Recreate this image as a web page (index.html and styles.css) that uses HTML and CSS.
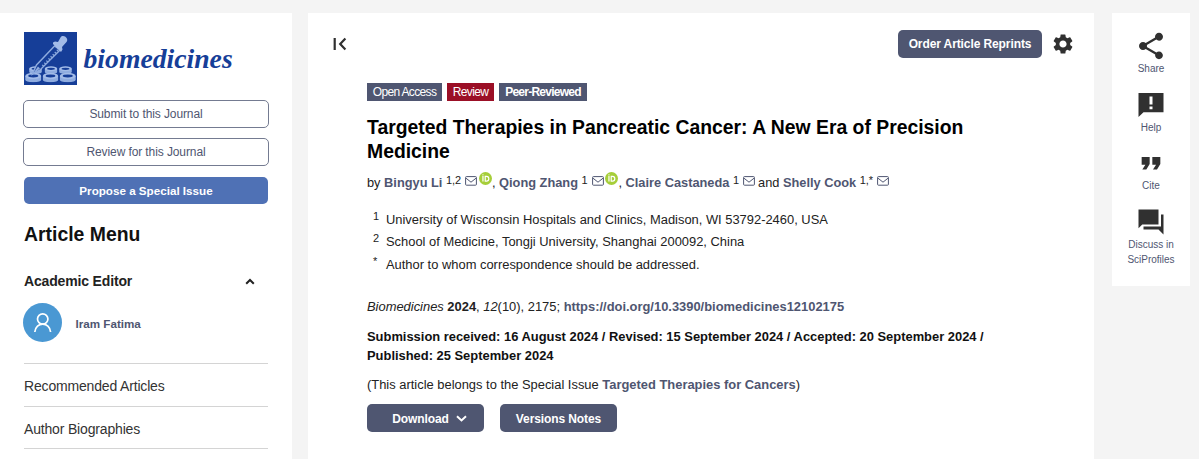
FILE: index.html
```html
<!DOCTYPE html>
<html lang="en">
<head>
<meta charset="utf-8">
<title>Targeted Therapies in Pancreatic Cancer</title>
<link rel="stylesheet" href="styles.css">
</head>
<body>
<svg width="0" height="0" class="defs">
  <symbol id="mail" viewBox="0 0 12 10"><rect x=".6" y=".6" width="10.8" height="8.6" rx=".8" fill="none" stroke="#4f5671"/><path d="M1 2.2 6 6.2 11 2.2" fill="none" stroke="#4f5671"/></symbol>
  <symbol id="orcid" viewBox="0 0 24 24"><circle cx="12" cy="12" r="12" fill="#a6ce39"/><path d="M7.300 7.600V17.500M11.500 8h2.500c5.500 0 5.500 8.700 0 8.700h-2.500z" fill="none" stroke="#fff" stroke-width="2.200"/><circle cx="7.300" cy="5.300" r="1.300" fill="#fff"/></symbol>
  <symbol id="dish" viewBox="0 0 17 10" preserveAspectRatio="none"><path d="M.3 3.500v3.600q0 2.600 8.200 2.600t8.200-2.600V3.500z" fill="#8facdf"/><ellipse cx="8.500" cy="3.400" rx="8.200" ry="3.200" fill="#a3bce8"/><ellipse cx="8.500" cy="3.500" rx="5.200" ry="1.400" fill="#163e98"/></symbol>
</svg>
<div class="page">
  <aside class="sidebar">
    <a class="logo">
      <svg width="53" height="53" viewBox="0 0 53 53">
        <rect width="53" height="53" fill="#163e98"/>
        <use href="#dish" x="5" y="34" width="13" height="8"/><use href="#dish" x="20.500" y="34" width="13" height="8"/><use href="#dish" x="35" y="34" width="13" height="8"/>
        <use href="#dish" x="1" y="40.500" width="16.500" height="10"/><use href="#dish" x="18.500" y="40.500" width="16" height="10"/><use href="#dish" x="35.500" y="40.500" width="16.500" height="10"/>
        <path d="M30.500 14 12.500 33 8.500 42 16.500 37.500 36 18z" fill="#163e98" stroke="#8facdf" stroke-width="1.400"/>
        <path d="m14 34.500-6 8.500 8-6.500z" fill="#8facdf"/>
        <path d="m18.500 34 15.500-16" stroke="#8facdf" stroke-width="2" stroke-dasharray="1.200 1.800" fill="none"/>
        <path d="m29 10.500 2-1 3 .5 2.500-4.500c2.500-4 9 1 6 4.500l-4.500 5 .5 2.500-1.500 2.500-8-8z" fill="#a3bce8"/>
      </svg>
      <span class="logo-name">biomedicines</span>
    </a>
    <a class="side-btn">Submit to this Journal</a>
    <a class="side-btn">Review for this Journal</a>
    <a class="side-btn filled">Propose a Special Issue</a>
    <h2 class="menu-title">Article Menu</h2>
    <div class="editor-head"><span>Academic Editor</span>
      <svg width="10" height="7" viewBox="0 0 10 7"><path d="m1.200 5.800 3.800-3.800 3.800 3.800" fill="none" stroke="#222" stroke-width="2"/></svg>
    </div>
    <div class="editor">
      <svg width="39" height="39" viewBox="0 0 39 39"><circle cx="19.500" cy="19.500" r="19.500" fill="#4a98d3"/><circle cx="19.700" cy="16" r="5.200" fill="none" stroke="#fff" stroke-width="1.700"/><path d="M11.800 29c.8-10.500 15-10.500 15.800 0" fill="none" stroke="#fff" stroke-width="1.700"/></svg>
      <span>Iram Fatima</span>
    </div>
    <div class="menu-row">Recommended Articles</div>
    <div class="menu-row">Author Biographies</div>
    <div class="menu-end"></div>
  </aside>

  <main class="article">
    <div class="toolbar">
      <svg width="14" height="14" viewBox="0 0 14 14"><path d="M1.700 1v12M12.400 1.600 7.200 7l5.200 5.400" fill="none" stroke="#303030" stroke-width="2.200"/></svg>
      <span class="btn reprints">Order Article Reprints</span>
      <svg class="gear" width="24" height="24" viewBox="0 0 24 24"><path fill="#303030" d="M19.140 12.940c.04-.3.060-.61.060-.94 0-.32-.02-.64-.07-.94l2.030-1.580a.49.490 0 0 0 .12-.61l-1.920-3.320a.488.488 0 0 0-.59-.22l-2.390.96c-.5-.38-1.030-.7-1.620-.94l-.36-2.540a.484.484 0 0 0-.48-.41h-3.840c-.24 0-.43.17-.47.41l-.36 2.540c-.59.24-1.130.57-1.620.94l-2.390-.96c-.22-.08-.47 0-.59.22L2.740 8.870c-.12.21-.08.47.12.61l2.030 1.580c-.05.3-.09.63-.09.94s.02.64.07.94l-2.030 1.580a.49.490 0 0 0-.12.61l1.920 3.320c.12.22.37.29.59.22l2.390-.96c.5.38 1.030.7 1.620.94l.36 2.540c.05.24.24.41.48.41h3.840c.24 0 .44-.17.47-.41l.36-2.540c.59-.24 1.130-.56 1.620-.94l2.390.96c.22.08.47 0 .59-.22l1.920-3.320c.12-.22.070-.47-.12-.61l-2.010-1.580zM12 15.600c-1.980 0-3.600-1.620-3.600-3.600s1.620-3.600 3.600-3.600 3.600 1.620 3.600 3.600-1.620 3.600-3.600 3.600z"/></svg>
    </div>
    <div class="content">
      <div class="tags"><span class="tag t1">Open Access</span><span class="tag t2">Review</span><span class="tag t3">Peer-Reviewed</span></div>
      <h1>Targeted Therapies in Pancreatic Cancer: A New Era of Precision<br>Medicine</h1>
      <div class="authors">
        <span>by <b>Bingyu Li</b></span><sup>1,2</sup><svg class="mail"><use href="#mail"/></svg><svg class="orcid"><use href="#orcid"/></svg><span>, <b>Qiong Zhang</b></span><sup>1</sup><svg class="mail"><use href="#mail"/></svg><svg class="orcid"><use href="#orcid"/></svg><span>, <b>Claire Castaneda</b></span><sup>1</sup><svg class="mail"><use href="#mail"/></svg><span class="last">and <b>Shelly Cook</b></span><sup>1,*</sup><svg class="mail"><use href="#mail"/></svg>
      </div>
      <div class="affs">
        <div class="aff"><sup>1</sup><span>University of Wisconsin Hospitals and Clinics, Madison, WI 53792-2460, USA</span></div>
        <div class="aff"><sup>2</sup><span>School of Medicine, Tongji University, Shanghai 200092, China</span></div>
        <div class="aff"><sup>*</sup><span>Author to whom correspondence should be addressed.</span></div>
      </div>
      <p class="cite"><i>Biomedicines</i> <strong>2024</strong>, <i>12</i>(10), 2175; <b>https://doi.org/10.3390/biomedicines12102175</b></p>
      <p class="history">Submission received: 16 August 2024 / Revised: 15 September 2024 / Accepted: 20 September 2024 /<br>Published: 25 September 2024</p>
      <p class="issue">(This article belongs to the Special Issue <b>Targeted Therapies for Cancers</b>)</p>
      <div class="actions">
        <span class="btn download">Download <svg width="11" height="7" viewBox="0 0 11 7"><path d="m1 1.200 4.500 4.200L10 1.200" fill="none" stroke="#fff" stroke-width="2"/></svg></span>
        <span class="btn">Versions Notes</span>
      </div>
    </div>
  </main>

  <nav class="tools">
    <a class="tool"><svg width="32" height="32" viewBox="0 0 24 24"><path d="M18 16.080c-.76 0-1.440.3-1.960.77L8.910 12.700c.05-.23.090-.46.090-.7s-.04-.47-.09-.7l7.050-4.110c.54.5 1.250.81 2.040.81 1.660 0 3-1.340 3-3s-1.340-3-3-3-3 1.340-3 3c0 .24.040.47.090.7L8.040 9.810C7.500 9.310 6.790 9 6 9c-1.660 0-3 1.340-3 3s1.340 3 3 3c.79 0 1.500-.31 2.040-.81l7.120 4.160c-.05.21-.08.43-.08.65 0 1.610 1.310 2.920 2.920 2.920s2.920-1.310 2.920-2.920-1.310-2.920-2.920-2.920z"/></svg><span>Share</span></a>
    <a class="tool"><svg width="30" height="32" viewBox="0 -1.300 24 26.600" preserveAspectRatio="none"><path d="M2 2v20l4-4h16V2zm11.200 13.500h-2.400v-2.300h2.400zm0-4h-2.400V5h2.400z"/></svg><span>Help</span></a>
    <a class="tool"><svg width="34" height="32" viewBox="0 0 24 24"><path d="M5.500 16.800h3L11 12.800V7.500H5v5.800h2.800zm8 0h3l2.500-4V7.500h-6v5.800h2.800z"/></svg><span>Cite</span></a>
    <a class="tool"><svg width="30" height="30" viewBox="0 0 24 24"><path d="M22 6h-2v9.500H6V18h12l4 4zm-4 8V2H2v15l3-3z"/></svg><span>Discuss in<br>SciProfiles</span></a>
  </nav>
</div>
</body>
</html>
```
FILE: styles.css
```css
* { box-sizing: border-box; }
body { margin: 0; background: #f4f4f4; font-family: "Liberation Sans", Arial, sans-serif; font-size: 12.920px; color: #222; overflow: hidden; }
h1, h2, p { margin: 0; }
svg { display: block; flex: none; }
.defs { position: absolute; }
.page { display: flex; align-items: flex-start; height: 459px; padding-top: 13px; white-space: nowrap; }

.sidebar { width: 292px; height: 446px; flex: none; background: #fff; padding: 19px 24px 0; }
.logo { display: flex; gap: 7px; height: 53px; margin-left: -.5px; }
.logo-name { font: italic bold 27.700px/53px "Liberation Serif", serif; color: #163e98; }
.side-btn { display: flex; align-items: center; justify-content: center; height: 28px; margin: 0 0 10px -1px; width: 246px; border: 1px solid #747b91; border-radius: 5px; color: #4f5671; font-size: 12px; letter-spacing: -.1px; padding-bottom: 1px; }
.logo + .side-btn { margin-top: 15px; }
.side-btn.filled { width: 244px; height: 27px; margin: 11px 0 0; border: 0; background: #4f71b5; color: #fff; font-size: 11.650px; font-weight: bold; letter-spacing: 0; }
.menu-title { margin-top: 17px; font-size: 19.400px; line-height: 26px; color: #111; }
.editor-head { display: flex; align-items: center; justify-content: space-between; margin-top: 24px; padding-right: 13px; font-size: 14px; letter-spacing: -.160px; line-height: 20px; font-weight: bold; }
.editor { display: flex; align-items: center; gap: 13.500px; height: 39px; margin: 12px 0 0 -1px; font-size: 11.650px; font-weight: bold; color: #4f5671; }
.editor span { padding-top: 2px; }
.menu-row { height: 42.500px; border-top: 1px solid #d4d4d4; font-size: 14px; letter-spacing: -.170px; line-height: 44px; color: #333; }
.editor + .menu-row { margin-top: 21px; }
.menu-end { border-top: 1px solid #d4d4d4; }

.article { width: 786px; height: 446px; flex: none; margin-left: 16px; background: #fff; }
.toolbar { display: flex; align-items: center; height: 28px; margin-top: 17px; padding: 0 19px 0 25px; }
.btn { display: flex; align-items: center; justify-content: center; gap: 7px; height: 28px; border-radius: 5px; background: #4f5671; color: #fff; font-size: 12px; letter-spacing: -.1px; font-weight: bold; }
.reprints { width: 144px; margin-left: auto; }
.gear { margin-left: 9px; }
.content { padding: 25px 0 0 59px; }
.tags { display: flex; gap: 5px; height: 18px; }
.tag { display: flex; align-items: center; justify-content: center; height: 18px; background: #4f5671; color: #fff; font-size: 12px; letter-spacing: -.650px; }
.t1 { width: 75px; }
.t2 { width: 47px; background: #9b0f26; }
.t3 { width: 88px; font-weight: bold; letter-spacing: -.750px; }
h1 { margin-top: 14px; font-size: 19.370px; line-height: 24px; color: #000; }
b { color: #4f5671; }
.authors { display: flex; height: 20px; margin-top: 9px; font-size: 12.800px; line-height: 22px; white-space: pre; }
sup { font-size: 11px; line-height: 16px; }
.authors sup { margin: 0 4px 0 3.500px; }
.mail { width: 12px; height: 10px; margin-top: 4px; }
.orcid { width: 13px; height: 13px; margin: 0 .3px 0 1.500px; }
.last { margin-left: 3px; }
.affs { margin-top: 16px; }
.aff { display: flex; height: 22.400px; line-height: 23px; }
.aff sup { width: 19px; padding-left: 6px; line-height: 17px; }
.cite { margin-top: 22px; line-height: 20px; }
.history { margin-top: 10px; line-height: 19px; font-weight: bold; color: #111; }
.issue { margin-top: 10px; line-height: 20px; }
.actions { display: flex; gap: 16px; margin-top: 9px; }
.actions .btn { width: 117px; padding-top: 1px; }
.actions .download { padding-left: 8px; }

.tools { width: 78px; height: 273px; flex: none; margin-left: 18px; padding-top: 17px; background: #fff; }
.tool { display: flex; flex-direction: column; align-items: center; height: 58.500px; fill: #303030; color: #4f5671; font-size: 10px; line-height: 15px; text-align: center; }
.tool svg { height: 32px; }
.tool span { margin-top: -1px; }
```
